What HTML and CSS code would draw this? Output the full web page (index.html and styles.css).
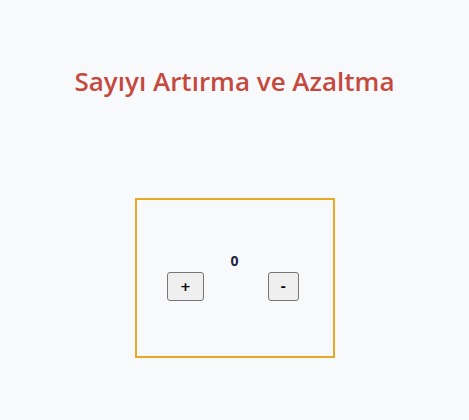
FILE: index.html
```html
<!DOCTYPE html>
<html lang="tr">
<head>
<meta charset="utf-8">
<title>Sayıyı Artırma ve Azaltma</title>
<link rel="stylesheet" href="styles.css">
</head>
<body>
<h1 class="title">Sayıyı Artırma ve Azaltma</h1>
<div class="counter">
  <div class="value">0</div>
  <div class="controls">
    <button class="btn">+</button>
    <button class="btn">-</button>
  </div>
</div>
</body>
</html>
```
FILE: styles.css
```css
html, body {
  margin: 0;
  padding: 0;
  background: #f8f9fa;
}
body {
  font-family: "Open Sans", "Noto Sans", sans-serif;
  height: 420px;
}
.title {
  margin: 0;
  padding-top: 63px;
  text-align: center;
  font-size: 26px;
  font-weight: 600;
  line-height: 36px;
  color: #c4493f;
}
.counter {
  box-sizing: border-box;
  width: 200px;
  height: 160px;
  margin: 99px auto 0;
  border: 2px solid #e9a825;
  display: flex;
  flex-direction: column;
  align-items: center;
  padding-top: 51px;
}
.value {
  font-size: 14px;
  font-weight: 700;
  color: #1d2440;
  line-height: 19px;
}
.controls {
  display: flex;
  justify-content: space-between;
  width: 132px;
  margin-top: 2px;
  margin-right: 3px;
}
.btn {
  font-family: "DejaVu Sans", sans-serif;
  font-size: 13px;
  font-weight: 700;
  color: #000;
  background: #efefef;
  border: 1px solid #767676;
  border-radius: 3px;
  padding: 5px 12px;
  line-height: 17px;
  height: 29px;
}
```
